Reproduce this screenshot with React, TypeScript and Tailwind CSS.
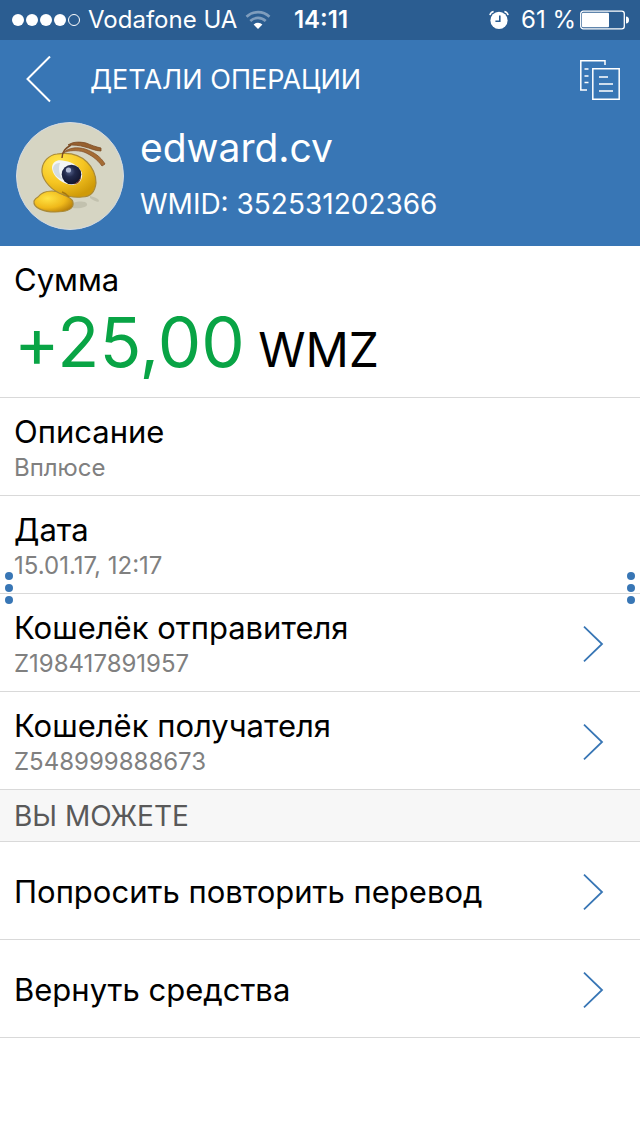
interface DetailRowProps {
  title: string
  value?: string
  onClick?: () => void
}

const details = [
  { title: 'Описание', value: 'Вплюсе', link: false },
  { title: 'Дата', value: '15.01.17, 12:17', link: false },
  { title: 'Кошелёк отправителя', value: 'Z198417891957', link: true },
  { title: 'Кошелёк получателя', value: 'Z548999888673', link: true },
]

const actions = ['Попросить повторить перевод', 'Вернуть средства']

function WifiIcon() {
  return (
    <svg width="26" height="20" viewBox="0 0 26 20" fill="none" aria-hidden="true">
      <path d="M1.5 6.8a16.5 16.5 0 0 1 23 0" stroke="#fff" strokeOpacity=".4" strokeWidth="2.6" />
      <path d="M5.3 11a11 11 0 0 1 15.4 0" stroke="#fff" strokeOpacity=".4" strokeWidth="2.6" />
      <path d="M8.6 14.6a6.4 6.4 0 0 1 8.8 0L13 19z" fill="#fff" />
    </svg>
  )
}

function AlarmIcon() {
  return (
    <svg width="20" height="20" viewBox="0 0 20 20" fill="none" aria-hidden="true">
      <circle cx="10" cy="10.4" r="8.6" fill="#fff" />
      <path d="M.9 5.2A5 5 0 0 1 4.6 1.4M19.1 5.2a5 5 0 0 0-3.7-3.8" stroke="#fff" strokeWidth="1.5" />
      <path d="M10.8 5.6v5.6H6.4" stroke="#2b5d91" strokeWidth="1.6" />
    </svg>
  )
}

function BatteryIcon() {
  return (
    <svg width="50" height="20" viewBox="0 0 50 20" fill="none" aria-hidden="true">
      <rect x=".7" y="1.2" width="43.6" height="17.6" rx="2.6" stroke="#fff" strokeWidth="1.3" />
      <rect x="2" y="2.8" width="27" height="14.4" rx="1" fill="#fff" />
      <path d="M46 6.5c2 0 3 1.4 3 3.5s-1 3.5-3 3.5z" fill="#fff" />
    </svg>
  )
}

function CopyIcon() {
  return (
    <svg width="42" height="42" viewBox="0 0 42 42" fill="none" stroke="#fff" strokeWidth="1.5" aria-hidden="true">
      <path d="M8 31H1.8V1.8H26V6" />
      <path d="M5.5 10H9.5M5.5 17H9.5M5.5 23.5H9.5" />
      <path d="M13.8 9.7H40.2V40.2H13.8z" />
      <path d="M20 18H29M20 25H34M20 32H34" />
    </svg>
  )
}

function Chevron() {
  return (
    <svg className="shrink-0" width="22" height="38" viewBox="0 0 22 38" fill="none" aria-hidden="true">
      <path d="M2 1.7 20 19 2 36.3" stroke="#3876b5" strokeWidth="1.8" />
    </svg>
  )
}

function Avatar() {
  return (
    <svg className="size-[108px] shrink-0" viewBox="0 0 108 108" role="img" aria-label="edward.cv">
      <defs>
        <radialGradient id="head" cx=".3" cy=".2" r=".85">
          <stop offset="0" stopColor="#ffe44c" />
          <stop offset=".55" stopColor="#f6c522" />
          <stop offset="1" stopColor="#cf9a08" />
        </radialGradient>
        <radialGradient id="body" cx=".35" cy=".35" r=".75">
          <stop offset="0" stopColor="#ffe344" />
          <stop offset=".6" stopColor="#f0b91a" />
          <stop offset="1" stopColor="#b57d0a" />
        </radialGradient>
        <radialGradient id="pupil" cx=".4" cy=".35" r=".7">
          <stop offset="0" stopColor="#56638c" />
          <stop offset=".4" stopColor="#222a4c" />
          <stop offset="1" stopColor="#10132b" />
        </radialGradient>
      </defs>
      <circle cx="54" cy="54" r="53.5" fill="#d6d5c3" stroke="#d5dbe3" />
      <path d="M57 81c6-2 13-2 14 1s-7 5-14 4zM74 74c5 1 9 3 9 5s-5 0-9-3z" fill="#bdbba9" opacity=".8" />
      <path d="M18 79c1-2 2-3 4-4 3-4 8-6 14-6 7 0 10 3 14 5 5 2 8 5 7 9-1 5-8 7-18 7-11 0-22-4-21-11z" fill="url(#body)" stroke="#a98a38" strokeWidth="1.2" />
      <path d="M26 47c1-8 7-14 15-15 12-2 23 1 30 8 6 6 9 13 9 21-1 9-6 14-14 14-8 1-16-1-23-4-10-5-18-15-17-24z" fill="url(#head)" stroke="#a98a38" strokeWidth="1.2" />
      <path d="M46 70c3 1 5 2 7 5" fill="none" stroke="#a6780f" strokeWidth="1.5" />
      <path d="M36 45c1-6 6-8 13-6 8 1 15 6 17 12 1 7-3 12-10 12-10-1-20-9-20-18z" fill="#f3f6f7" />
      <path d="M37 46c1-4 4-5 7-5-2 5-1 12 3 17-6-2-10-7-10-12z" fill="#b3c2d0" opacity=".5" />
      <circle cx="55.5" cy="52.500" r="9.8" fill="url(#pupil)" />
      <path d="M57 62c4-1 7-4 8-8 0 5-3 9-8 8z" fill="#7b3c22" />
      <circle cx="52.5" cy="48" r="2.6" fill="#b3bdd8" />
      <path d="M46 36c0-7 4-10 9-13" fill="none" stroke="#7b4b24" strokeWidth="1.5" />
      <path d="M52 23c6-4 13-3 18-2 5 2 10 4 15 5l0 3c-6 0-11-3-16-4-6-2-12-2-17-2z" fill="#96602f" stroke="#7b4b24" strokeWidth=".8" />
      <path d="M47 31c6-6 15-6 22-4 9 3 16 8 20 15l-3 2c-5-7-11-11-18-14-7-2-15-2-21 1z" fill="#a56c34" stroke="#84502a" strokeWidth=".8" />
    </svg>
  )
}

function StatusBar() {
  return (
    <div className="grid h-10 grid-cols-[1fr_auto_1fr] items-center bg-[#2b5d91] pr-[10px] pl-3 text-2xl text-white">
      <div className="flex items-center gap-2">
        <div className="flex gap-[2px]">
          <span className="size-3 rounded-full bg-white" />
          <span className="size-3 rounded-full bg-white" />
          <span className="size-3 rounded-full bg-white" />
          <span className="size-3 rounded-full bg-white" />
          <span className="size-3 rounded-full border border-white" />
        </div>
        <span className="whitespace-nowrap">Vodafone UA</span>
        <WifiIcon />
      </div>
      <span className="font-semibold">14:11</span>
      <div className="flex items-center justify-end gap-1">
        <AlarmIcon />
        <span className="pl-2 whitespace-nowrap">61 %</span>
        <BatteryIcon />
      </div>
    </div>
  )
}

function Header() {
  return (
    <header className="bg-[#3876b5] text-white">
      <div className="flex h-20 items-center pr-[19px] pl-6">
        <button type="button" aria-label="Назад" className="w-[66px]">
          <svg width="28" height="48" viewBox="0 0 28 48" fill="none" aria-hidden="true">
            <path d="M26 .5 3.5 23 26 45.500" stroke="#fff" strokeWidth="2" />
          </svg>
        </button>
        <h1 className="flex-1 text-[27px]">ДЕТАЛИ ОПЕРАЦИИ</h1>
        <button type="button" aria-label="Копировать">
          <CopyIcon />
        </button>
      </div>
      <div className="flex gap-4 px-4 pt-[2px] pb-4">
        <Avatar />
        <div>
          <p className="text-[39px] leading-[52px]">edward.cv</p>
          <p className="pt-3 text-[28px] leading-9">WMID: 352531202366</p>
        </div>
      </div>
    </header>
  )
}

function DetailRow({ title, value, onClick }: DetailRowProps) {
  const content = (
    <>
      <span className="flex-1">
        <span className="block text-[31px] leading-10">{title}</span>
        {value && <span className="block text-2xl text-[#808080]">{value}</span>}
      </span>
      {onClick && <Chevron />}
    </>
  )
  const rowClass = 'flex h-[98px] w-full items-center border-b border-[#d9d9d9] pt-[2px] pr-9 pl-[14px] text-left'

  if (onClick) {
    return (
      <button type="button" onClick={onClick} className={rowClass}>
        {content}
      </button>
    )
  }
  return <div className={rowClass}>{content}</div>
}

function SideDots() {
  return (
    <div className="flex flex-col justify-center gap-1">
      <span className="size-2 rounded-full bg-[#3876b5]" />
      <span className="size-2 rounded-full bg-[#3876b5]" />
      <span className="size-2 rounded-full bg-[#3876b5]" />
    </div>
  )
}

export default function App() {
  const handleOpen = (name: string) => {
    console.log('open:', name)
  }

  return (
    <div className="flex min-h-screen flex-col bg-white font-['Inter',sans-serif] text-black">
      <StatusBar />
      <div className="relative flex-1">
        <Header />
        <main>
          <section className="h-[152px] border-b border-[#d9d9d9] pt-[14px] pl-[14px]">
            <h2 className="text-[31px] leading-10">Сумма</h2>
            <p className="text-5xl leading-[84px] whitespace-nowrap [font-feature-settings:'calt'_0]">
              <span className="text-[69px] text-[#09a445]">+25,00</span> WMZ
            </p>
          </section>

          {details.map((item) => (
            <DetailRow
              key={item.title}
              title={item.title}
              value={item.value}
              onClick={item.link ? () => handleOpen(item.title) : undefined}
            />
          ))}

          <h2 className="h-[52px] border-b border-[#d9d9d9] bg-[#f7f7f7] pl-[14px] text-[28px] leading-[52px] text-[#595959]">
            ВЫ МОЖЕТЕ
          </h2>

          {actions.map((action) => (
            <DetailRow key={action} title={action} onClick={() => handleOpen(action)} />
          ))}
        </main>

        {/* Page edge handles */}
        <div className="pointer-events-none absolute inset-0 flex justify-between px-[5px]">
          <SideDots />
          <SideDots />
        </div>
      </div>
    </div>
  )
}
